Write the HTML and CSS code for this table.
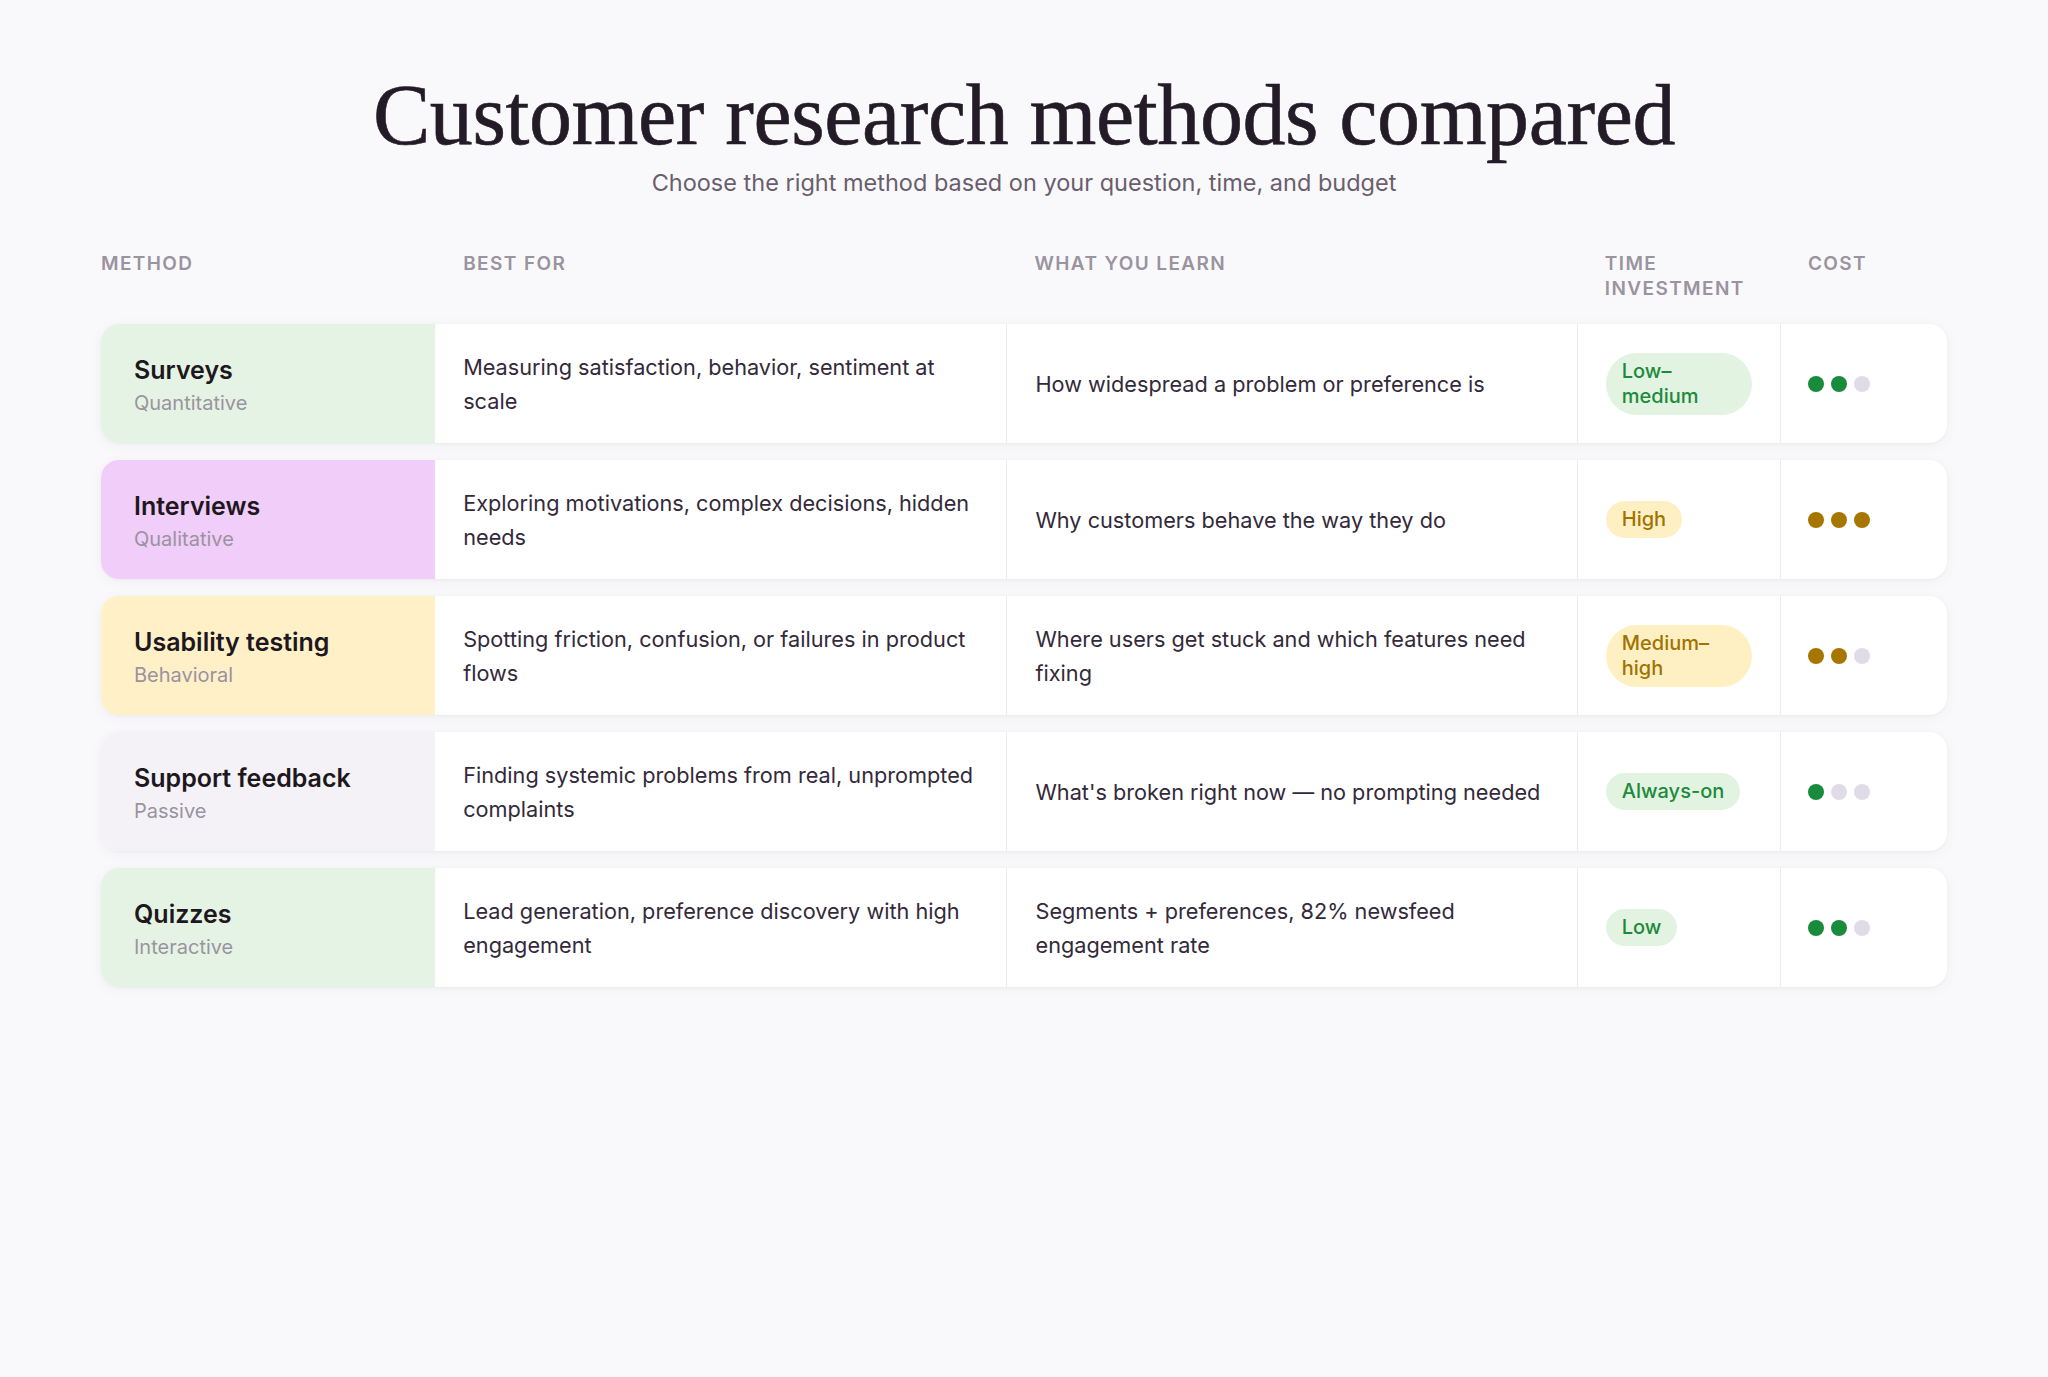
FILE: index.html
```html
<!DOCTYPE html>
<html lang="en">
<head>
<meta charset="utf-8">
<title>Customer research methods compared</title>
<link rel="stylesheet" href="styles.css">
</head>
<body>
<main class="page">
  <header class="intro">
    <h1 class="title">Customer research methods compared</h1>
    <p class="subtitle">Choose the right method based on your question, time, and budget</p>
  </header>

  <section class="table">
    <div class="head">
      <div class="hcell hcell-first">Method</div>
      <div class="hcell">Best for</div>
      <div class="hcell">What you learn</div>
      <div class="hcell">Time investment</div>
      <div class="hcell">Cost</div>
    </div>

    <div class="row">
      <div class="method method-green">
        <div class="method-name">Surveys</div>
        <div class="method-type">Quantitative</div>
      </div>
      <div class="cell">Measuring satisfaction, behavior, sentiment at scale</div>
      <div class="cell cell-line">How widespread a problem or preference is</div>
      <div class="cell cell-line"><span class="badge badge-green">Low–medium</span></div>
      <div class="cell cell-line"><div class="dots"><span class="dot dot-green"></span><span class="dot dot-green"></span><span class="dot"></span></div></div>
    </div>

    <div class="row">
      <div class="method method-purple">
        <div class="method-name">Interviews</div>
        <div class="method-type">Qualitative</div>
      </div>
      <div class="cell">Exploring motivations, complex decisions, hidden needs</div>
      <div class="cell cell-line">Why customers behave the way they do</div>
      <div class="cell cell-line"><span class="badge badge-gold">High</span></div>
      <div class="cell cell-line"><div class="dots"><span class="dot dot-gold"></span><span class="dot dot-gold"></span><span class="dot dot-gold"></span></div></div>
    </div>

    <div class="row">
      <div class="method method-yellow">
        <div class="method-name">Usability testing</div>
        <div class="method-type">Behavioral</div>
      </div>
      <div class="cell">Spotting friction, confusion, or failures in product flows</div>
      <div class="cell cell-line">Where users get stuck and which features need fixing</div>
      <div class="cell cell-line"><span class="badge badge-gold">Medium–high</span></div>
      <div class="cell cell-line"><div class="dots"><span class="dot dot-gold"></span><span class="dot dot-gold"></span><span class="dot"></span></div></div>
    </div>

    <div class="row">
      <div class="method method-gray">
        <div class="method-name">Support feedback</div>
        <div class="method-type">Passive</div>
      </div>
      <div class="cell">Finding systemic problems from real, unprompted complaints</div>
      <div class="cell cell-line">What's broken right now — no prompting needed</div>
      <div class="cell cell-line"><span class="badge badge-green">Always-on</span></div>
      <div class="cell cell-line"><div class="dots"><span class="dot dot-green"></span><span class="dot"></span><span class="dot"></span></div></div>
    </div>

    <div class="row">
      <div class="method method-green">
        <div class="method-name">Quizzes</div>
        <div class="method-type">Interactive</div>
      </div>
      <div class="cell">Lead generation, preference discovery with high engagement</div>
      <div class="cell cell-line">Segments + preferences, 82% newsfeed engagement rate</div>
      <div class="cell cell-line"><span class="badge badge-green">Low</span></div>
      <div class="cell cell-line"><div class="dots"><span class="dot dot-green"></span><span class="dot dot-green"></span><span class="dot"></span></div></div>
    </div>
  </section>
</main>
</body>
</html>
```

FILE: styles.css
```css
* { box-sizing: border-box; }

html, body {
  margin: 0;
  padding: 0;
  background: #f9f9fb;
}

body {
  font-family: Inter, "Noto Sans", "Liberation Sans", sans-serif;
  color: #2a2230;
  min-height: 1377px;
}

.page {
  padding: 70px 101px 0;
}

.intro {
  text-align: center;
}

.title {
  margin: 0;
  font-family: "Liberation Serif", "DejaVu Serif", serif;
  font-weight: 400;
  font-size: 86px;
  line-height: 1.05;
  letter-spacing: -0.4px;
  color: #231b27;
  -webkit-text-stroke: 0.6px #231b27;
}

.subtitle {
  margin: 8px 0 0;
  font-size: 23.5px;
  line-height: 30px;
  color: #6a5e6d;
}

.table {
  margin-top: 53px;
  display: flex;
  flex-direction: column;
  gap: 17px;
}

.head,
.row {
  display: grid;
  grid-template-columns: 334fr 571fr 570fr 203fr 167fr;
}

.head {
  padding-bottom: 6px;
}

.hcell {
  padding: 0 28px;
  font-size: 19px;
  line-height: 25px;
  font-weight: 600;
  letter-spacing: 1.4px;
  text-transform: uppercase;
  color: #9a93a0;
}

.hcell-first {
  padding-left: 0;
}

.row {
  min-height: 119px;
  background: #ffffff;
  border-radius: 18px;
  overflow: hidden;
  box-shadow: 0 2px 14px rgba(30, 20, 50, 0.045), 0 1px 3px rgba(30, 20, 50, 0.03);
}

.method {
  padding: 5px 33px 0;
  display: flex;
  flex-direction: column;
  justify-content: center;
}

.method-green { background: #e5f3e4; }
.method-purple { background: #f1cdf9; }
.method-yellow { background: #fff0c8; }
.method-gray { background: #f4f2f7; }

.method-name {
  font-size: 25px;
  line-height: 34px;
  font-weight: 600;
  color: #1d1720;
}

.method-type {
  font-size: 20px;
  line-height: 32px;
  color: #9a93a0;
}

.cell {
  padding: 18px 28px;
  display: flex;
  align-items: center;
  font-size: 21.7px;
  line-height: 34px;
  color: #33293a;
}

.cell-line {
  border-left: 1px solid #ecebf0;
}

.badge {
  display: inline-block;
  padding: 6px 16px;
  border-radius: 999px;
  font-size: 20px;
  line-height: 25px;
  font-weight: 500;
}

.badge-green {
  background: #e3f3e2;
  color: #1c8a3b;
}

.badge-gold {
  background: #fff0c4;
  color: #a07300;
}

.dots {
  display: flex;
  gap: 7px;
  margin-left: -1px;
}

.dot {
  width: 16px;
  height: 16px;
  border-radius: 50%;
  background: #e0dce7;
}

.dot-green { background: #1a8a3c; }
.dot-gold { background: #a67600; }
```
